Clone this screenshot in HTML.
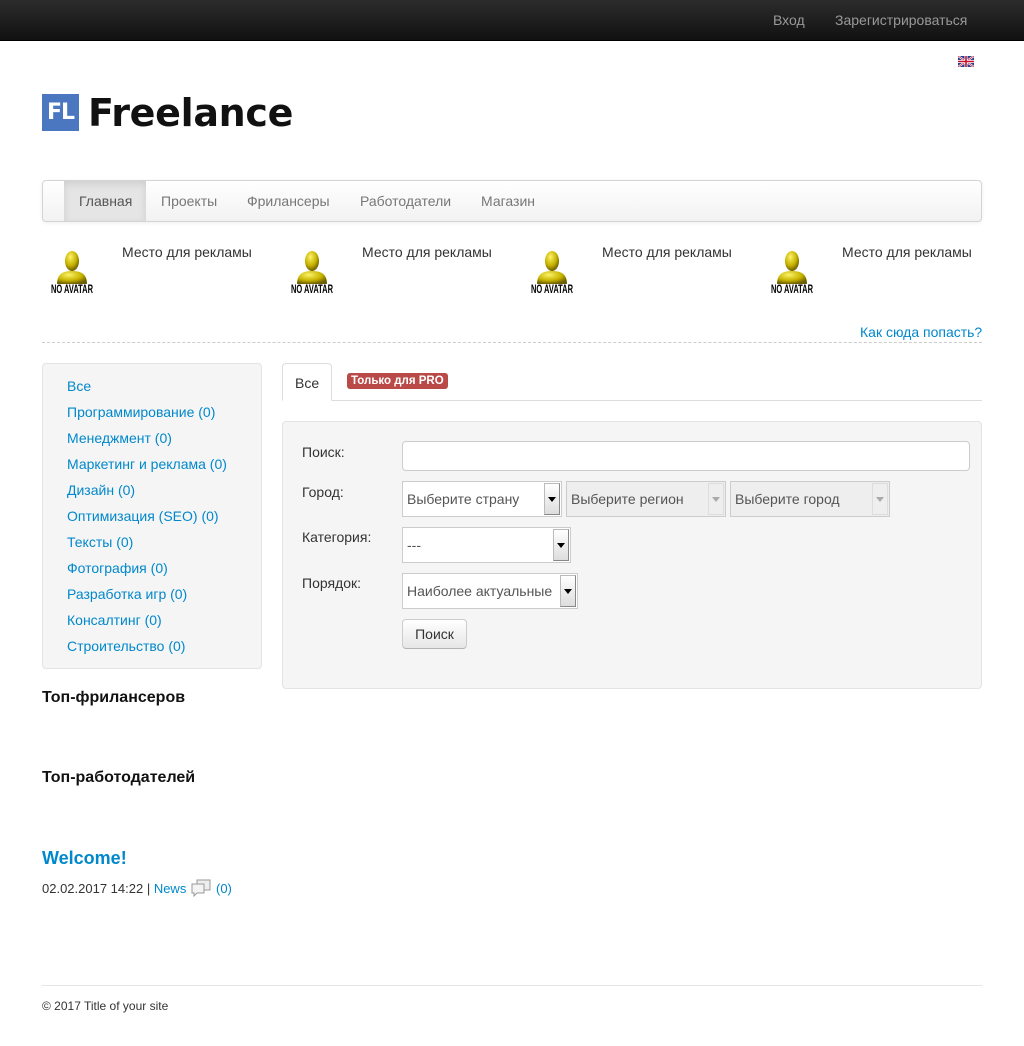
<!DOCTYPE html>
<html><head><meta charset="utf-8"><style>
*{box-sizing:border-box;margin:0;padding:0}
body{width:1024px;height:1046px;background:#fff;font-family:"Liberation Sans",sans-serif;font-size:14px;color:#333;position:relative;overflow:hidden}
.a{position:absolute}
a{color:#0088cc;text-decoration:none}
.top{left:0;top:0;width:1024px;height:41px;background:linear-gradient(#2c2c2c,#111);border-bottom:1px solid #000}
.top span{position:absolute;top:12px;color:#999;font-size:14px}
.nav{left:42px;top:180px;width:940px;height:42px;border:1px solid #d4d4d4;border-radius:4px;background:linear-gradient(#fff,#f2f2f2);box-shadow:0 1px 4px rgba(0,0,0,.07)}
.nav span{position:absolute;top:12px;color:#777;font-size:14px}
.nav .act{left:21px;top:0;height:40px;width:82px;background:#e5e5e5;box-shadow:inset 0 3px 8px rgba(0,0,0,.1);color:#555;padding:12px 0 0 15px}
.ad{font-size:14px;color:#333}
.side{left:42px;top:363px;width:220px;height:306px;background:#f5f5f5;border:1px solid #e3e3e3;border-radius:4px}
.side a{position:absolute;left:24px;font-size:14px}
h4{position:absolute;font-size:16px;color:#111;font-weight:bold}
.form{left:282px;top:421px;width:700px;height:268px;background:#f5f5f5;border:1px solid #e3e3e3;border-radius:4px}
.lbl{position:absolute;left:19px;font-size:14px;color:#333}
.sel{position:absolute;height:36px;border:1px solid #ccc;background:#fff;font-size:14px;color:#555;padding:9px 0 0 4px}
.sel.dis{background:#eee;color:#555}
.sel b{position:absolute;right:1px;top:1px;width:16px;height:32px;background:linear-gradient(#fff,#ddd);border:1px solid #bbb;border-right-color:#888;border-bottom-color:#888}
.sel b:after{content:"";position:absolute;left:3px;top:13px;border:4px solid transparent;border-top:5px solid #000}
.sel.dis b{background:#eee;border-color:#ddd}
.sel.dis b:after{border-top-color:#aaa}
</style></head><body>
<div class="a top"><span style="left:773px">Вход</span><span style="left:835px">Зарегистрироваться</span></div>
<svg class="a" style="left:958px;top:56px" width="16" height="11" viewBox="0 0 16 11"><rect width="16" height="11" fill="#2b3f8c"/><path d="M0 0L16 11M16 0L0 11" stroke="#fff" stroke-width="2"/><path d="M0 0L16 11M16 0L0 11" stroke="#c8102e" stroke-width=".7"/><path d="M8 0V11M0 5.5H16" stroke="#fff" stroke-width="3"/><path d="M8 0V11M0 5.5H16" stroke="#c8102e" stroke-width="1.6"/></svg>
<div class="a" style="left:42px;top:94px;width:37px;height:37px;background:#4a77c0;color:#fff;font:bold 22px 'DejaVu Sans',sans-serif;line-height:37px;text-align:center;letter-spacing:-1px">FL</div>
<div class="a" style="left:88px;top:91px;font:bold 38px 'DejaVu Sans',sans-serif;color:#111;letter-spacing:-0.3px">Freelance</div>
<div class="a nav"><span class="a act">Главная</span><span style="left:118px">Проекты</span><span style="left:204px">Фрилансеры</span><span style="left:317px">Работодатели</span><span style="left:438px">Магазин</span></div>
<div id="ads"></div>
<div class="a" style="left:42px;top:342px;width:940px;border-top:1px dashed #ccc"></div>
<a class="a" style="left:860px;top:324px">Как сюда попасть?</a>
<div class="a side">
<a style="top:14px">Все</a><a style="top:40px">Программирование (0)</a><a style="top:66px">Менеджмент (0)</a><a style="top:92px">Маркетинг и реклама (0)</a><a style="top:118px">Дизайн (0)</a><a style="top:144px">Оптимизация (SEO) (0)</a><a style="top:170px">Тексты (0)</a><a style="top:196px">Фотография (0)</a><a style="top:222px">Разработка игр (0)</a><a style="top:248px">Консалтинг (0)</a><a style="top:274px">Строительство (0)</a>
</div>
<h4 style="left:42px;top:689px">Топ-фрилансеров</h4>
<h4 style="left:42px;top:769px">Топ-работодателей</h4>
<a class="a" style="left:42px;top:848px;font-size:18px;font-weight:bold">Welcome!</a>
<div class="a" style="left:42px;top:881px;font-size:13px;color:#333">02.02.2017 14:22 | <a>News</a></div>
<svg class="a" style="left:191px;top:879px" width="20" height="18" viewBox="0 0 20 18"><rect x="6" y="1" width="13" height="10" fill="#eee" stroke="#999"/><path d="M1 5h12v9H6l-3 3v-3H1z" fill="#f4f4f4" stroke="#999"/></svg>
<a class="a" style="left:216px;top:881px;font-size:13px">(0)</a>
<div class="a" style="left:282px;top:400px;width:700px;border-top:1px solid #ddd"></div>
<div class="a" style="left:282px;top:363px;width:50px;height:38px;border:1px solid #ddd;border-bottom-color:#fff;border-radius:4px 4px 0 0;background:#fff;padding:11px 0 0 12px">Все</div>
<div class="a" style="left:347px;top:373px;background:#b94a48;color:#fff;font-size:11.5px;font-weight:bold;padding:2px 4px;border-radius:3px">Только для PRO</div>
<div class="a form">
<span class="lbl" style="top:22px">Поиск:</span>
<div class="a" style="left:119px;top:19px;width:568px;height:30px;background:#fff;border:1px solid #ccc;border-radius:4px"></div>
<span class="lbl" style="top:62px">Город:</span>
<div class="sel" style="left:119px;top:59px;width:160px">Выберите страну<b></b></div>
<div class="sel dis" style="left:283px;top:59px;width:160px">Выберите регион<b></b></div>
<div class="sel dis" style="left:447px;top:59px;width:160px">Выберите город<b></b></div>
<span class="lbl" style="top:107px">Категория:</span>
<div class="sel" style="left:119px;top:105px;width:169px">---<b></b></div>
<span class="lbl" style="top:153px">Порядок:</span>
<div class="sel" style="left:119px;top:151px;width:176px">Наиболее актуальные<b></b></div>
<div class="a" style="left:119px;top:197px;width:65px;height:30px;border:1px solid #ccc;border-bottom-color:#b3b3b3;border-radius:4px;background:linear-gradient(#fff,#e6e6e6);text-align:center;padding-top:6px;color:#333">Поиск</div>
</div>
<div class="a" style="left:42px;top:985px;width:940px;border-top:1px solid #e5e5e5"></div>
<div class="a" style="left:42px;top:999px;font-size:12px;color:#333">© 2017 Title of your site</div>
<script>
var h='';[0,240,480,720].forEach(function(x){
h+='<svg class="a" style="left:'+(50+x)+'px;top:248px" width="46" height="48" viewBox="0 0 46 48"><defs><radialGradient id="g'+x+'" cx="40%" cy="30%" r="70%"><stop offset="0" stop-color="#fbf26a"/><stop offset=".6" stop-color="#c8b400"/><stop offset="1" stop-color="#6d5f00"/></radialGradient></defs><ellipse cx="22" cy="13" rx="7" ry="10" fill="url(#g'+x+')"/><path d="M7 36c0-10 6-13 15-13s15 3 15 13z" fill="url(#g'+x+')"/><text x="22" y="45" text-anchor="middle" font-family="Liberation Sans Narrow,Liberation Sans,sans-serif" font-weight="bold" font-size="12" fill="#000" textLength="42" lengthAdjust="spacingAndGlyphs">NO AVATAR</text></svg><span class="a ad" style="left:'+(122+x)+'px;top:244px">Место для рекламы</span>';});
document.getElementById('ads').innerHTML=h;
</script>
</body></html>
